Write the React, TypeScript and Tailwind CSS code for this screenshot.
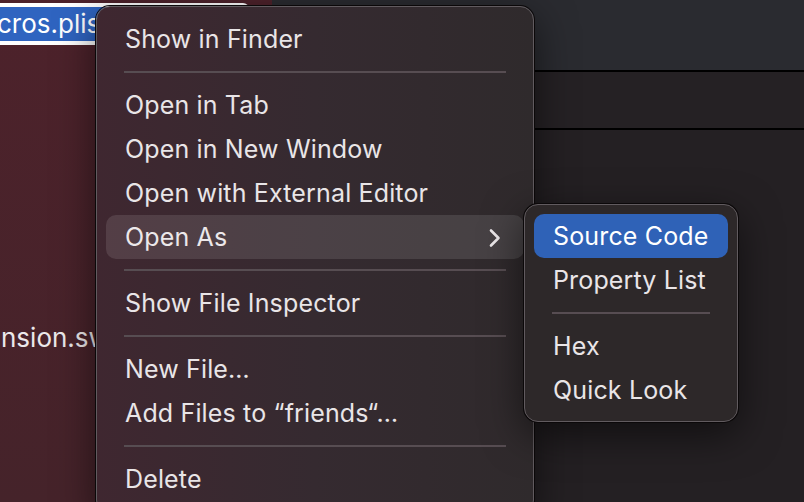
const font = { fontFamily: 'Inter, "Noto Sans", sans-serif' };

type Entry = { label?: string; active?: boolean; submenu?: boolean; sep?: boolean };

const mainItems: Entry[] = [
  { label: 'Show in Finder' },
  { sep: true },
  { label: 'Open in Tab' },
  { label: 'Open in New Window' },
  { label: 'Open with External Editor' },
  { label: 'Open As', active: true, submenu: true },
  { sep: true },
  { label: 'Show File Inspector' },
  { sep: true },
  { label: 'New File…' },
  { label: 'Add Files to “friends“…' },
  { sep: true },
  { label: 'Delete' },
];

const subItems: Entry[] = [
  { label: 'Source Code', active: true },
  { label: 'Property List' },
  { sep: true },
  { label: 'Hex' },
  { label: 'Quick Look' },
];

function Chevron() {
  return (
    <svg width="14" height="20" viewBox="0 0 14 20" fill="none" className="text-[#ebe7e9]">
      <path d="M3 2.5 L10.5 10 L3 17.5" stroke="currentColor" strokeWidth="2.6" strokeLinecap="round" strokeLinejoin="round" />
    </svg>
  );
}

function MenuRows({ items, blue }: { items: Entry[]; blue?: boolean }) {
  return (
    <>
      {items.map((it, i) =>
        it.sep ? (
          <div key={i} className="flex h-[22px] items-center px-[27px]">
            <div className="h-[2px] w-full bg-[#574d52]" />
          </div>
        ) : (
          <div
            key={i}
            className={`mx-[9px] flex h-[44px] items-center justify-between whitespace-nowrap rounded-[10px] pl-[19px] pr-[22px] pt-[2px] text-[25px] tracking-[0.15px] ${
              it.active ? (blue ? 'bg-[#2f62b7] text-white' : 'bg-[#ffffff1c] text-[#ece8ea]') : 'text-[#e9e5e7]'
            }`}
          >
            <span>{it.label}</span>
            {it.submenu && <Chevron />}
          </div>
        ),
      )}
    </>
  );
}

export default function App() {
  return (
    <div className="relative flex h-[502px] w-[804px] overflow-hidden bg-[#231f22]" style={font}>
      {/* sidebar */}
      <div className="flex w-[272px] flex-col bg-linear-to-b from-[#4d222b] to-[#45232a]">
        <div className="mt-[3px] flex h-[42px] w-[249px] items-center overflow-hidden rounded-r-[6px] border-[4px] border-l-0 border-white bg-[#2f64c0]">
          <span className="ml-[-3px] whitespace-nowrap text-[26px] leading-none text-white">cros.plist</span>
        </div>
        <div className="mt-[271px] flex h-[44px] items-center">
          <span className="ml-[1px] text-[26px] leading-none text-[#ece8ea]">nsion.swift</span>
        </div>
      </div>

      {/* editor area */}
      <div className="flex flex-1 flex-col">
        <div className="h-[72px] border-b-2 border-black bg-[#2a2b30]" />
        <div className="h-[58px] border-b-2 border-black bg-[#252124]" />
        <div className="flex-1 bg-[#242023]" />
      </div>

      {/* main context menu */}
      <div className="absolute left-[96px] top-[6px] w-[438px] rounded-[14px] border border-[#615b5f] bg-linear-to-r from-[#3f2730] via-[#352a30] to-[#2f2a2c] pb-[12px] pt-[10px] shadow-[0_0_0_1px_#0b0809,0_12px_40px_rgba(0,0,0,0.55)]">
        <MenuRows items={mainItems} />
      </div>

      {/* submenu */}
      <div className="absolute left-[524px] top-[204px] w-[214px] rounded-[14px] border border-[#615b5f] bg-[#2d2829] py-[9px] shadow-[0_0_0_1px_#0b0809,0_12px_40px_rgba(0,0,0,0.55)]">
        <MenuRows items={subItems} blue />
      </div>
    </div>
  );
}
